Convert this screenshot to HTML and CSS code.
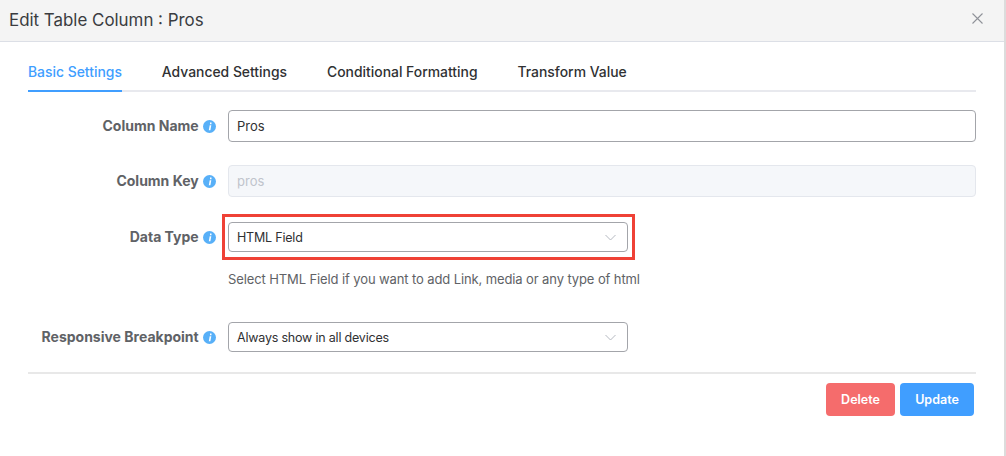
FILE: index.html

```html
<!DOCTYPE html>
<html lang="en">
<head>
  <meta charset="UTF-8" />
  <title>Edit Table Column</title>
  <link rel="stylesheet" href="styles.css">
</head>
<body>
  <div class="dialog">
    <div class="dialog-header">
      <span class="dialog-title">Edit Table Column : Pros</span>
      <svg class="close-icon" width="11" height="11" viewBox="0 0 11 11"><path d="M.5.5l10 10M10.5.5l-10 10" stroke="#8f9299" stroke-width="1.1" fill="none"/></svg>
    </div>
    <div class="dialog-body">
      <div class="tabs">
        <span class="tab active">Basic Settings</span>
        <span class="tab">Advanced Settings</span>
        <span class="tab">Conditional Formatting</span>
        <span class="tab">Transform Value</span>
      </div>

      <div class="row row-name">
        <label class="row-label">Column Name <svg class="info" width="13" height="13" viewBox="0 0 13 13"><circle cx="6.5" cy="6.5" r="6.5" fill="#58b0f8"/><path d="M7 2.6h1.5v1.6H7zM6.7 5.3h1.6l-.9 5H5.8z" fill="#fff"/></svg></label>
        <div class="field field-input">Pros</div>
      </div>

      <div class="row row-key">
        <label class="row-label">Column Key <svg class="info" width="13" height="13" viewBox="0 0 13 13"><circle cx="6.5" cy="6.5" r="6.5" fill="#58b0f8"/><path d="M7 2.6h1.5v1.6H7zM6.7 5.3h1.6l-.9 5H5.8z" fill="#fff"/></svg></label>
        <div class="field field-input disabled">pros</div>
      </div>

      <div class="row row-type">
        <label class="row-label">Data Type <svg class="info" width="13" height="13" viewBox="0 0 13 13"><circle cx="6.5" cy="6.5" r="6.5" fill="#58b0f8"/><path d="M7 2.6h1.5v1.6H7zM6.7 5.3h1.6l-.9 5H5.8z" fill="#fff"/></svg></label>
        <div class="select-wrap">
          <div class="field field-select">HTML Field
            <svg class="chevron" width="11" height="7" viewBox="0 0 11 7"><path d="M.5 1l5 5 5-5" stroke="#b4b8c0" stroke-width="1" fill="none"/></svg>
          </div>
          <div class="highlight"></div>
        </div>
      </div>
      <p class="help">Select HTML Field if you want to add Link, media or any type of html</p>

      <div class="row row-break">
        <label class="row-label">Responsive Breakpoint <svg class="info" width="13" height="13" viewBox="0 0 13 13"><circle cx="6.5" cy="6.5" r="6.5" fill="#58b0f8"/><path d="M7 2.6h1.5v1.6H7zM6.7 5.3h1.6l-.9 5H5.8z" fill="#fff"/></svg></label>
        <div class="select-wrap">
          <div class="field field-select">Always show in all devices
            <svg class="chevron" width="11" height="7" viewBox="0 0 11 7"><path d="M.5 1l5 5 5-5" stroke="#b4b8c0" stroke-width="1" fill="none"/></svg>
          </div>
        </div>
      </div>

      <div class="actions">
        <button class="btn btn-delete" type="button">Delete</button>
        <button class="btn btn-update" type="button">Update</button>
      </div>
    </div>
  </div>
</body>
</html>
```

FILE: styles.css

```css
* {
  box-sizing: border-box;
}
html, body {
  margin: 0;
  height: 100%;
  overflow: hidden;
}
body {
  font-family: Inter, "Noto Sans", sans-serif;
  background: white;
  color: #303133;
}
.dialog {
  height: 456px;
  border-right: 2px solid #dcdcdc;
}
.dialog-header {
  height: 42px;
  background: #f4f4f4;
  border-bottom: 1px solid #dcdfe6;
  display: flex;
  align-items: center;
  justify-content: space-between;
  padding: 0 21px 2px 9px;
}
.dialog-title {
  font-size: 16.9px;
  color: #3a3c40;
}
.close-icon {
  margin-bottom: 3px;
}
.dialog-body {
  padding: 18px 28px 0 28px;
  width: 1004px;
}
.tabs {
  display: flex;
  gap: 40px;
  height: 32px;
  border-bottom: 2px solid #e8e9ee;
}
.tab {
  font-size: 13.9px;
  font-weight: 500;
  line-height: 24px;
  height: 32px;
  color: #303133;
}
.tab.active {
  color: #409eff;
  border-bottom: 2px solid #409eff;
}
.row {
  display: flex;
  align-items: center;
}
.row-name {
  margin-top: 18px;
}
.row-key {
  margin-top: 23px;
}
.row-type {
  margin-top: 25px;
}
.row-break {
  margin-top: 35px;
}
.row-label {
  width: 200px;
  padding: 0 12px 2px 0;
  text-align: right;
  font-size: 14px;
  font-weight: 700;
  color: #606266;
  display: block;
}
.info {
  vertical-align: -2px;
  margin-left: 1px;
}
.field {
  font-size: 13px;
  color: #303133;
  background: white;
  border: 1px solid #a3a5aa;
  border-radius: 4px;
  padding-left: 8px;
  display: flex;
  align-items: center;
}
.field-input {
  width: 748px;
  height: 32px;
}
.field-input.disabled {
  background: #f5f7fa;
  border-color: #e4e7ed;
  color: #c0c4cc;
}
.select-wrap {
  position: relative;
  width: 400px;
}
.field-select {
  height: 30px;
  font-size: 12.5px;
  letter-spacing: -0.2px;
  justify-content: space-between;
  padding-right: 11px;
}
.highlight {
  position: absolute;
  left: -6px;
  top: -8px;
  width: 413px;
  height: 46px;
  border: 3px solid #ef4136;
}
.help {
  margin: 19px 0 0 200px;
  font-size: 13px;
  letter-spacing: -0.11px;
  line-height: 16px;
  color: #606266;
}
.actions {
  margin-top: 20px;
  border-top: 2px solid #e8e8e8;
  padding: 9px 2px 0 0;
  display: flex;
  justify-content: flex-end;
  gap: 5px;
}
.btn {
  font-family: inherit;
  font-size: 12.5px;
  font-weight: 600;
  color: white;
  height: 33px;
  border: 0;
  border-radius: 4px;
  padding: 0;
}
.btn-delete {
  width: 69px;
  background: #f56c6c;
}
.btn-update {
  width: 74px;
  background: #409eff;
}
```
